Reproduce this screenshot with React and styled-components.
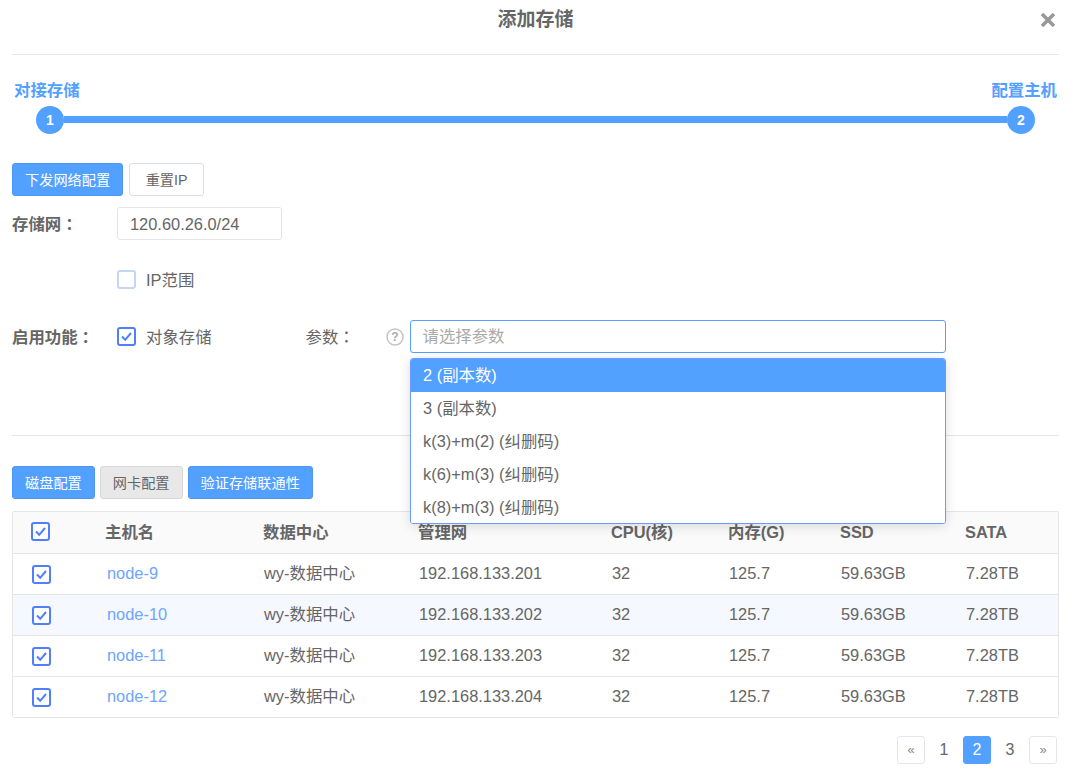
import React from "react";
import styled, { createGlobalStyle } from "styled-components";

const blue = "#52a0ff";
const font = '"Liberation Sans", "Noto Sans CJK SC", sans-serif';

const Global = createGlobalStyle`
  html, body { margin: 0; padding: 0; background: #fff; overflow: hidden; }
  body { font-family: ${font}; color: #666; font-size: 16.4px; line-height: 20px; }
  * { box-sizing: border-box; }
`;

const Page = styled.div`
  width: 1047px;
  margin-left: 12px;
  height: 772px;
`;

const Header = styled.div`
  height: 55px;
  display: grid;
  grid-template-columns: 1fr auto 1fr;
  padding-top: 7px;
  border-bottom: 1px solid #e9e9e9;
`;

const Title = styled.h3`
  grid-column: 2;
  margin: 0;
  font-size: 19px;
  line-height: 26px;
  font-weight: 700;
  color: #666;
`;

const Close = styled.div`
  justify-self: end;
  margin: 4px 2px 0 0;
  line-height: 0;
  color: #999;
`;

const StepLabels = styled.div`
  display: flex;
  justify-content: space-between;
  padding: 0 2px;
  margin-top: 25px;
  color: ${blue};
  font-weight: 700;
  line-height: 20px;
`;

const Track = styled.div`
  display: flex;
  align-items: center;
  margin: 6px 24px 0;
`;

const Dot = styled.div`
  width: 28px;
  height: 28px;
  border-radius: 50%;
  background: ${blue};
  color: #fff;
  font-size: 14px;
  font-weight: 700;
  display: flex;
  align-items: center;
  justify-content: center;
  flex: none;
`;

const Line = styled.div`
  flex: 1;
  height: 7px;
  margin-top: -2px;
  background: ${blue};
`;

const Buttons = styled.div`
  display: flex;
  gap: ${(p) => p.$gap || 6}px;
  margin-top: ${(p) => p.$top}px;
`;

const Button = styled.button`
  height: 33px;
  padding: 0 ${(p) => p.$pad || 12}px 2px;
  font-family: ${font};
  font-size: 14.2px;
  border-radius: 3px;
  border: 1px solid ${(p) => (p.$kind === "primary" ? "#4f95f5" : p.$kind === "muted" ? "#d8d8d8" : "#d5e0ee")};
  background: ${(p) => (p.$kind === "primary" ? blue : p.$kind === "muted" ? "#e8e8e8" : "#fff")};
  color: ${(p) => (p.$kind === "primary" ? "#fff" : "#666")};
`;

const FormRow = styled.div`
  display: flex;
  align-items: center;
  height: ${(p) => p.$h}px;
  margin-top: ${(p) => p.$top}px;
`;

const Label = styled.div`
  width: 105px;
  flex: none;
  font-weight: 700;
  color: #666;
`;

const Colon = styled.span`
  font-family: "Noto Sans CJK TC", sans-serif;
`;

const Field = styled.div`
  width: 165px;
  height: 33px;
  padding: 0 12px;
  line-height: 33px;
  border: 1px solid #e4e4e4;
  border-radius: 3px;
  color: #666;
`;

const CheckWrap = styled.label`
  display: flex;
  align-items: center;
  gap: 10px;
`;

const Box = styled.span`
  width: 19px;
  height: 19px;
  border-radius: 3px;
  border: 2px solid ${(p) => (p.$on ? "#4f7fff" : "#c5d6f0")};
  background: #fff;
  display: flex;
  align-items: center;
  justify-content: center;
  flex: none;
`;

const ParamLabel = styled.div`
  margin-left: 94px;
  width: 80px;
  color: #666;
  flex: none;
`;

const SelectWrap = styled.div`
  position: relative;
  width: 536px;
  margin-left: 6px;
`;

const SelectInput = styled.div`
  height: 33px;
  padding: 0 12px;
  line-height: 31px;
  border: 1px solid ${blue};
  border-radius: 3px;
  color: #aaa;
`;

const Dropdown = styled.div`
  position: absolute;
  z-index: 5;
  top: 38px;
  left: 0;
  width: 100%;
  height: 166px;
  background: #fff;
  border: 1px solid #6a9cff;
  border-radius: 3px;
  box-shadow: 0 2px 12px rgba(0, 0, 0, 0.14);
  overflow: hidden;
`;

const Option = styled.div`
  height: 33px;
  padding: 0 12.5px;
  line-height: 33px;
  background: ${(p) => (p.$active ? blue : "#fff")};
  color: ${(p) => (p.$active ? "#fff" : "#666")};
`;

const Rule = styled.div`
  height: 1px;
  background: #e6e6e6;
  margin-top: 82px;
`;

const Table = styled.div`
  margin-top: 12px;
  border: 1px solid #e6e6e6;
  border-radius: 2px;
`;

const columns = "92px 158px 155px 193px 117px 112px 125px 1fr";

const HeadRow = styled.div`
  display: grid;
  grid-template-columns: ${columns};
  align-items: center;
  height: 41px;
  padding-bottom: 2px;
  background: #fafafa;
  font-weight: 700;
  color: #666;
`;

const Row = styled.div`
  display: grid;
  grid-template-columns: ${columns};
  align-items: center;
  height: 41px;
  padding: 0 0 2px 1px;
  border-top: 1px solid #e6e6e6;
  background: ${(p) => (p.$alt ? "#f5f8ff" : "#fff")};
  color: #666;
`;

const BoxCell = styled.div`
  padding-left: 18px;
  margin-top: ${(p) => p.$drop || 0}px;
`;

const NodeLink = styled.a`
  padding-left: 1px;
  color: #6ea5fb;
  text-decoration: none;
`;

const Pager = styled.div`
  display: flex;
  justify-content: flex-end;
  gap: 5px;
  margin-top: 18px;
  padding-right: 2px;
`;

const PageItem = styled.div`
  width: 28px;
  height: 28px;
  border-radius: 3px;
  display: flex;
  align-items: center;
  justify-content: center;
  font-size: ${(p) => (p.$arrow ? 13 : 16)}px;
  border: 1px solid ${(p) => (p.$arrow ? "#e6e6e6" : p.$active ? blue : "transparent")};
  background: ${(p) => (p.$active ? blue : "#fff")};
  color: ${(p) => (p.$active ? "#fff" : p.$arrow ? "#888" : "#666")};
`;

const Check = ({ on }) => (
  <Box $on={on}>
    {on && (
      <svg width="13" height="13" viewBox="0 0 13 13" fill="none">
        <path d="M2 6.5 L5.2 9.8 L11 3" stroke="#4f7fff" strokeWidth="2" />
      </svg>
    )}
  </Box>
);

const options = ["2 (副本数)", "3 (副本数)", "k(3)+m(2) (纠删码)", "k(6)+m(3) (纠删码)", "k(8)+m(3) (纠删码)"];
const nodes = ["node-9", "node-10", "node-11", "node-12"];
const ips = ["192.168.133.201", "192.168.133.202", "192.168.133.203", "192.168.133.204"];

export default function App() {
  return (
    <Page>
      <Global />
      <Header>
        <Title>添加存储</Title>
        <Close>
          <svg width="18" height="18" viewBox="0 0 18 18">
            <path d="M3 3 L15 15 M15 3 L3 15" stroke="currentColor" strokeWidth="3.6" />
          </svg>
        </Close>
      </Header>

      <StepLabels>
        <span>对接存储</span>
        <span>配置主机</span>
      </StepLabels>
      <Track>
        <Dot>1</Dot>
        <Line />
        <Dot>2</Dot>
      </Track>

      <Buttons $top={29}>
        <Button $kind="primary">下发网络配置</Button>
        <Button $pad={15.5}>重置IP</Button>
      </Buttons>

      <FormRow $h={33} $top={11}>
        <Label>存储网<Colon>：</Colon></Label>
        <Field>120.60.26.0/24</Field>
      </FormRow>

      <FormRow $h={19} $top={30}>
        <Label />
        <CheckWrap>
          <Check />
          IP范围
        </CheckWrap>
      </FormRow>

      <FormRow $h={33} $top={31}>
        <Label>启用功能<Colon>：</Colon></Label>
        <CheckWrap>
          <Check on />
          对象存储
        </CheckWrap>
        <ParamLabel>参数<Colon>：</Colon></ParamLabel>
        <svg width="18" height="18" viewBox="0 0 18 18" fill="none">
          <circle cx="9" cy="9" r="8" stroke="#c4c4c4" strokeWidth="1.5" />
          <text x="9" y="13" textAnchor="middle" fontSize="12" fontWeight="700" fill="#aaa" fontFamily="Liberation Sans">?</text>
        </svg>
        <SelectWrap>
          <SelectInput>请选择参数</SelectInput>
          <Dropdown>
            {options.map((o, i) => (
              <Option key={o} $active={i === 0}>{o}</Option>
            ))}
          </Dropdown>
        </SelectWrap>
      </FormRow>

      <Rule />

      <Buttons $top={30} $gap={5}>
        <Button $kind="primary">磁盘配置</Button>
        <Button $kind="muted">网卡配置</Button>
        <Button $kind="primary">验证存储联通性</Button>
      </Buttons>

      <Table>
        <HeadRow>
          <BoxCell><Check on /></BoxCell>
          <div>主机名</div>
          <div>数据中心</div>
          <div>管理网</div>
          <div>CPU(核)</div>
          <div>内存(G)</div>
          <div>SSD</div>
          <div>SATA</div>
        </HeadRow>
        {nodes.map((n, i) => (
          <Row key={n} $alt={i === 1}>
            <BoxCell $drop={2}><Check on /></BoxCell>
            <NodeLink>{n}</NodeLink>
            <div>wy-数据中心</div>
            <div>{ips[i]}</div>
            <div>32</div>
            <div>125.7</div>
            <div>59.63GB</div>
            <div>7.28TB</div>
          </Row>
        ))}
      </Table>

      <Pager>
        <PageItem $arrow>«</PageItem>
        <PageItem>1</PageItem>
        <PageItem $active>2</PageItem>
        <PageItem>3</PageItem>
        <PageItem $arrow>»</PageItem>
      </Pager>
    </Page>
  );
}
